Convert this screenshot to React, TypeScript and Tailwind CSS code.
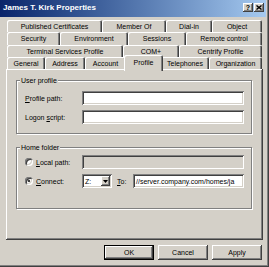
const raised =
  'shadow-[inset_-1px_-1px_#404040,inset_1px_1px_#ffffff,inset_-2px_-2px_#808080]';
const sunken =
  'shadow-[inset_1px_1px_#808080,inset_-1px_-1px_#ffffff,inset_2px_2px_#404040,inset_-2px_-2px_#d4d0c8]';
const tabEdge =
  'shadow-[inset_1px_1px_#ffffff,inset_-1px_0_#404040,inset_-2px_0_#808080]';

interface Tab {
  label: string;
  w: string;
}

const backRows: Tab[][] = [
  [
    { label: 'Published Certificates', w: 'w-[95px]' },
    { label: 'Member Of', w: 'w-[64px]' },
    { label: 'Dial-in', w: 'w-[46px]' },
    { label: 'Object', w: 'w-[50px]' },
  ],
  [
    { label: 'Security', w: 'w-[53px]' },
    { label: 'Environment', w: 'w-[68px]' },
    { label: 'Sessions', w: 'w-[58px]' },
    { label: 'Remote control', w: 'w-[76px]' },
  ],
  [
    { label: 'Terminal Services Profile', w: 'w-[116px]' },
    { label: 'COM+', w: 'w-[56px]' },
    { label: 'Centrify Profile', w: 'w-[83px]' },
  ],
];

function TabCell({ label, w }: Tab) {
  return (
    <div className={`${w} h-full flex items-center justify-center rounded-t-[2px] ${tabEdge}`}>
      {label}
    </div>
  );
}

function CapButton({ children }: { children: React.ReactNode }) {
  return (
    <div className={`w-[10px] h-[9px] bg-[#d4d0c8] flex items-center justify-center ${raised}`}>
      {children}
    </div>
  );
}

function TextBox({ w, disabled, children }: { w: string; disabled?: boolean; children?: React.ReactNode }) {
  return (
    <div
      className={`${w} h-[14px] ${disabled ? 'bg-[#d4d0c8]' : 'bg-white'} ${sunken} flex items-center px-[3px] overflow-hidden whitespace-nowrap`}
    >
      {children}
    </div>
  );
}

function Radio({ checked }: { checked?: boolean }) {
  return (
    <span className="w-[8px] h-[8px] rounded-full bg-white shadow-[inset_1px_1px_#808080,inset_-1px_-1px_#ffffff,inset_2px_2px_#404040,inset_-2px_-2px_#d4d0c8] flex items-center justify-center">
      {checked && <span className="w-[2px] h-[2px] rounded-full bg-black" />}
    </span>
  );
}

function GroupBox({ title, className, children }: { title: string; className: string; children: React.ReactNode }) {
  return (
    <div
      className={`relative w-[236px] border border-[#808080] shadow-[1px_1px_#ffffff,inset_1px_1px_#ffffff] ${className}`}
    >
      <span className="absolute left-[3px] top-[-4px] bg-[#d4d0c8] px-[1px] leading-[7px]">{title}</span>
      {children}
    </div>
  );
}

function Button({ children, isDefault }: { children: React.ReactNode; isDefault?: boolean }) {
  return (
    <div
      className={`w-[50px] h-[15px] flex items-center justify-center bg-[#d4d0c8] ${
        isDefault
          ? 'border border-black shadow-[inset_-1px_-1px_#404040,inset_1px_1px_#ffffff,inset_-2px_-2px_#808080]'
          : raised
      }`}
    >
      {children}
    </div>
  );
}

export default function App() {
  return (
    <div className="w-[269px] h-[267px] bg-[#d4d0c8] font-['Liberation_Sans',Arial,sans-serif] text-[7px] leading-none text-black overflow-hidden shadow-[inset_-1px_-1px_#404040,inset_-2px_-2px_#808080]">
      {/* title bar */}
      <div className="h-[17px] w-[266px] bg-linear-to-r from-[#0a246a] to-[#a6caf0] flex items-center pl-[3px] pr-[2px]">
        <span className="flex-1 text-white font-bold text-[8px] -mt-[1px]">James T. Kirk Properties</span>
        <div className="flex gap-[1px] -mt-[2px]">
          <CapButton>
            <span className="font-bold text-[7px]">?</span>
          </CapButton>
          <CapButton>
            <svg width="6" height="5" viewBox="0 0 6 5">
              <path d="M0.5 0.5L5.5 4.5M5.5 0.5L0.5 4.5" stroke="#000" strokeWidth="1.4" />
            </svg>
          </CapButton>
        </div>
      </div>

      {/* tabs */}
      <div className="mt-[3px] ml-[7px] flex flex-col">
        <div className="flex h-[12px]">
          {backRows[0].map((t) => (
            <TabCell key={t.label} {...t} />
          ))}
        </div>
        <div className="flex h-[13px]">
          {backRows[1].map((t) => (
            <TabCell key={t.label} {...t} />
          ))}
        </div>
        <div className="flex h-[12px]">
          {backRows[2].map((t) => (
            <TabCell key={t.label} {...t} />
          ))}
        </div>
        <div className="flex h-[12px]">
          <TabCell label="General" w="w-[38px]" />
          <TabCell label="Address" w="w-[40px]" />
          <TabCell label="Account" w="w-[41px]" />
          <div className="relative z-10 -mx-[2px] -mt-[2px] w-[39px] h-[16px] bg-[#d4d0c8] rounded-t-[2px] shadow-[inset_1px_1px_#ffffff,inset_-1px_0_#404040,inset_-2px_0_#808080] flex justify-center pt-[4px]">
            Profile
          </div>
          <TabCell label="Telephones" w="w-[48px]" />
          <TabCell label="Organization" w="w-[53px]" />
        </div>
      </div>

      {/* page */}
      <div className={`ml-[6px] w-[257px] h-[171px] pl-[10px] pt-[11px] flex flex-col gap-[13px] ${raised}`}>
        <GroupBox title="User profile" className="h-[54px] pt-[10px] pl-[8px] flex flex-col gap-[5px]">
          <div className="flex items-center">
            <span className="w-[57px]">
              <u>P</u>rofile path:
            </span>
            <TextBox w="w-[162px]" />
          </div>
          <div className="flex items-center">
            <span className="w-[57px]">
              Logon <u>s</u>cript:
            </span>
            <TextBox w="w-[162px]" />
          </div>
        </GroupBox>

        <GroupBox title="Home folder" className="h-[62px] pt-[7px] pl-[8px] flex flex-col gap-[5px]">
          <div className="flex items-center">
            <span className="w-[57px] flex items-center gap-[3px]">
              <Radio />
              <span>
                <u>L</u>ocal path:
              </span>
            </span>
            <TextBox w="w-[162px]" disabled />
          </div>
          <div className="flex items-center">
            <span className="w-[57px] flex items-center gap-[3px]">
              <Radio checked />
              <span>
                <u>C</u>onnect:
              </span>
            </span>
            <div className={`w-[30px] h-[14px] bg-white ${sunken} flex items-center pl-[3px] pr-[2px]`}>
              <span className="flex-1">Z:</span>
              <div className={`w-[9px] h-[10px] bg-[#d4d0c8] flex items-center justify-center ${raised}`}>
                <svg width="5" height="3" viewBox="0 0 5 3">
                  <path d="M0 0H5L2.5 3Z" fill="#000" />
                </svg>
              </div>
            </div>
            <span className="w-[21px] pl-[5px]">
              <u>T</u>o:
            </span>
            <TextBox w="w-[111px]">//server.company.com/homes/ja</TextBox>
          </div>
        </GroupBox>
      </div>

      {/* buttons */}
      <div className="mt-[5px] w-[262px] flex justify-end gap-[4px]">
        <Button isDefault>OK</Button>
        <Button>Cancel</Button>
        <Button>Apply</Button>
      </div>
    </div>
  );
}
